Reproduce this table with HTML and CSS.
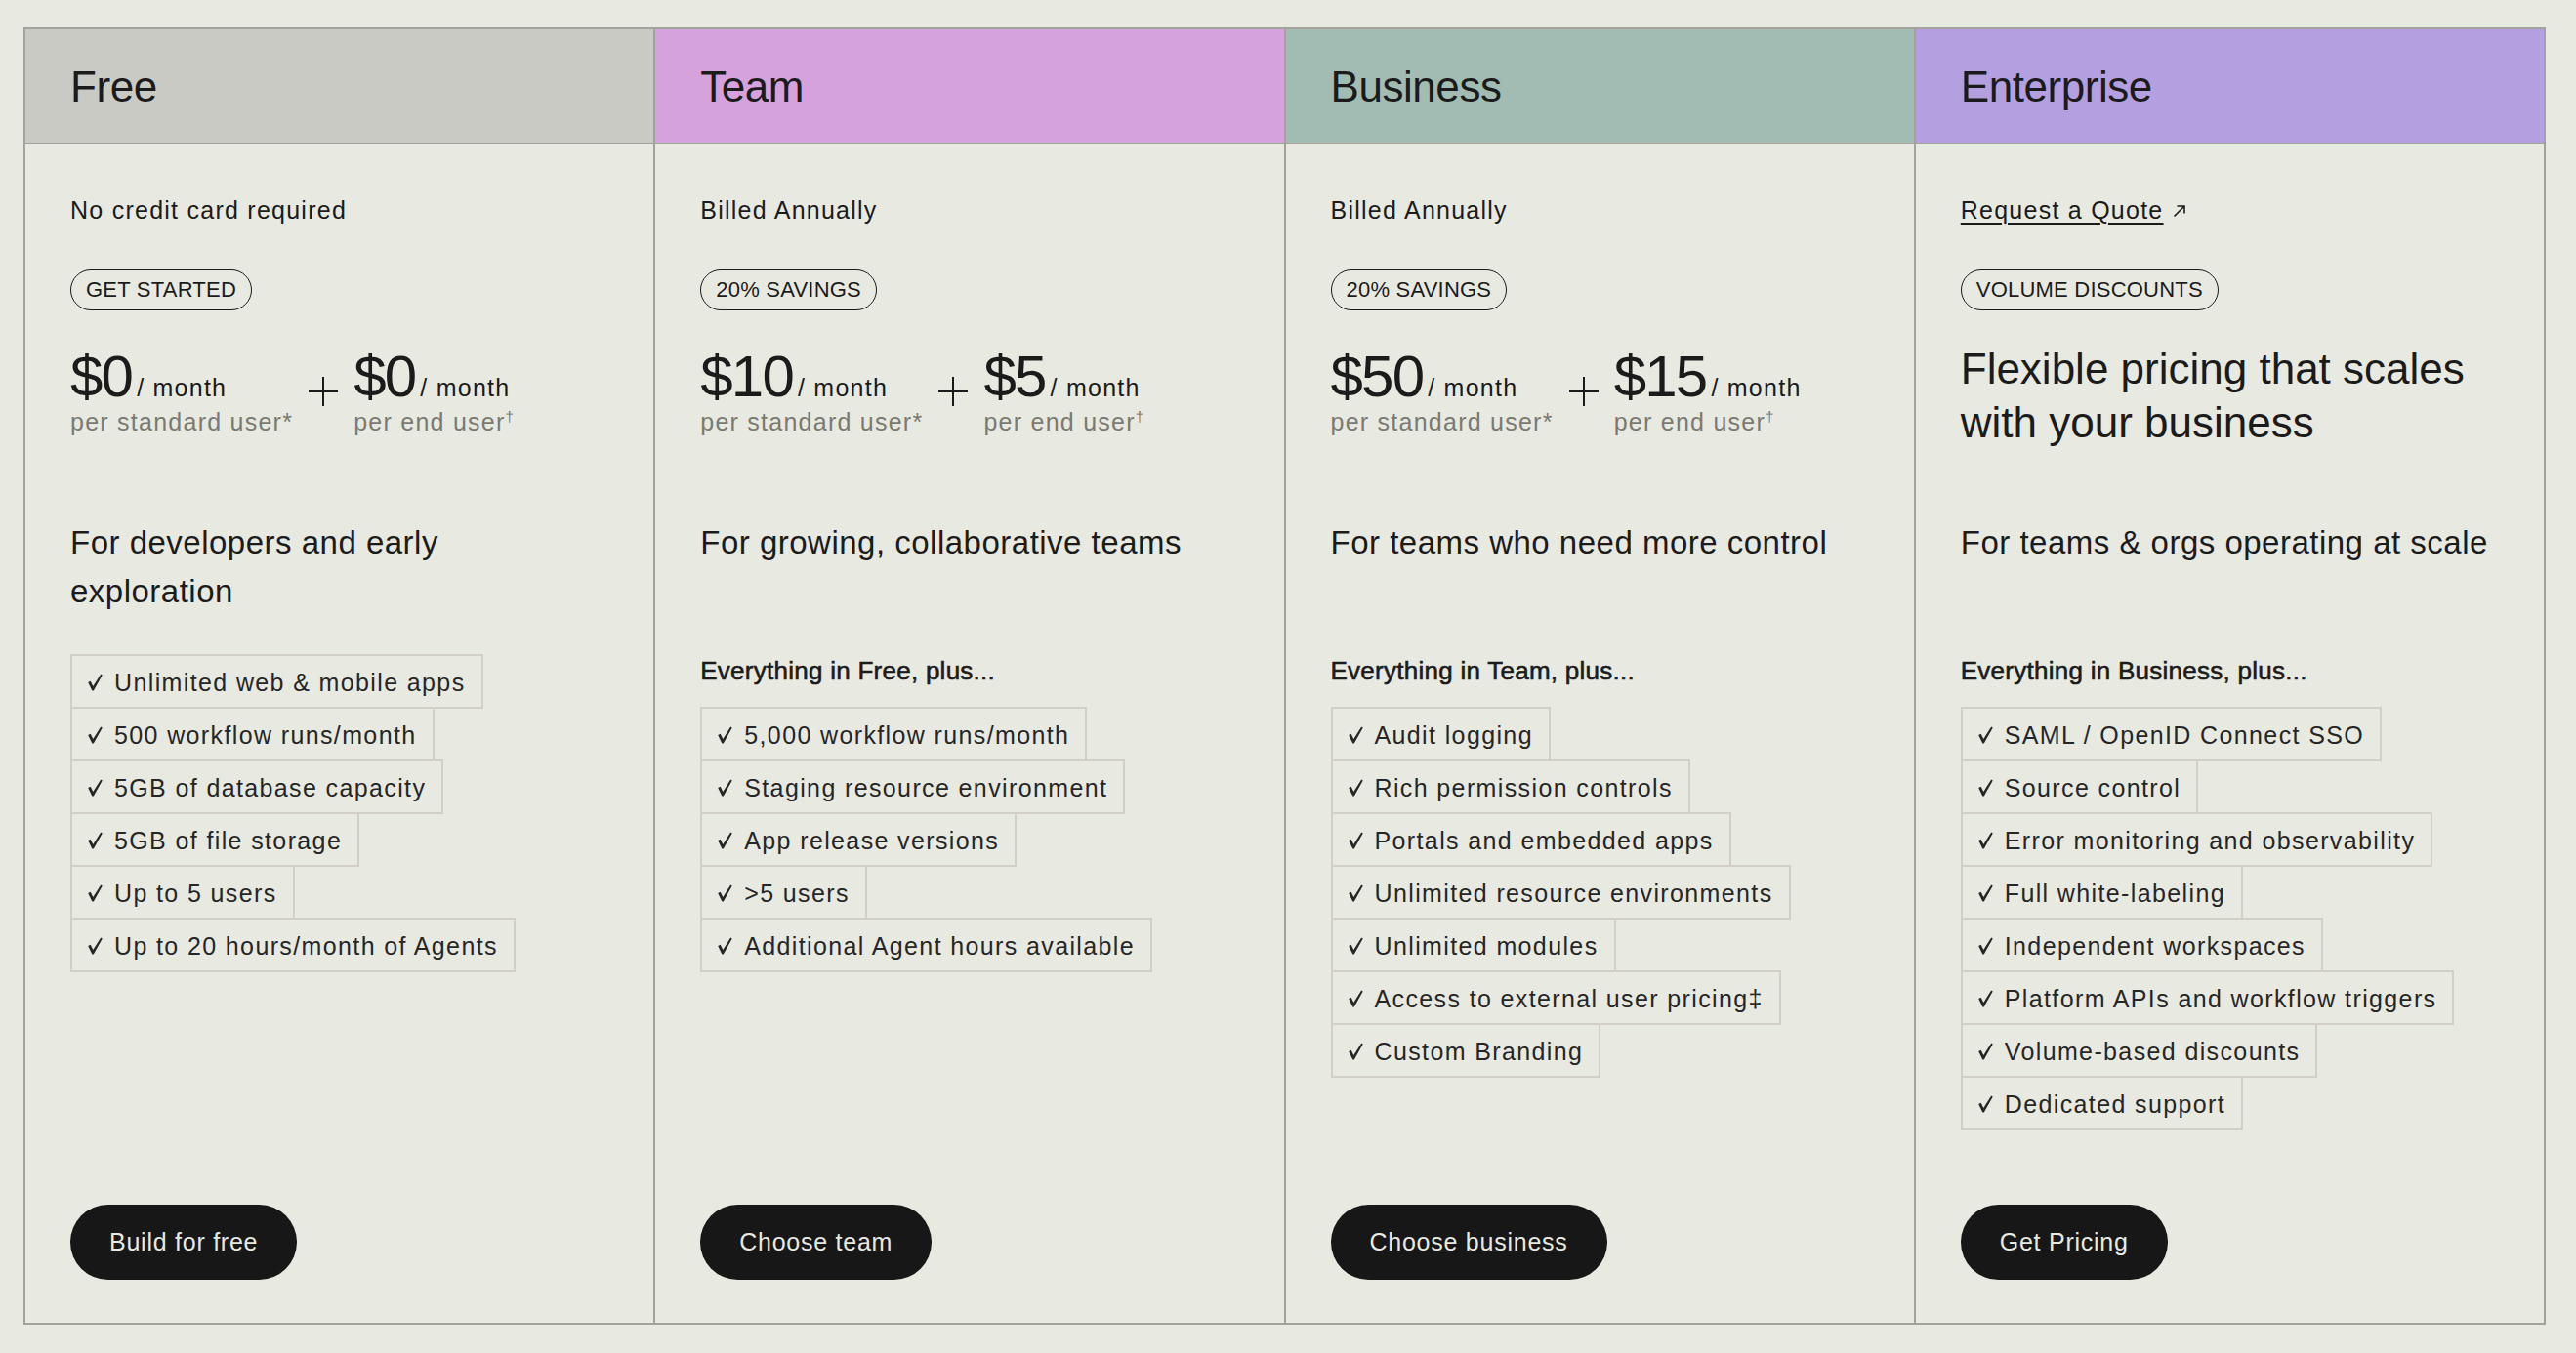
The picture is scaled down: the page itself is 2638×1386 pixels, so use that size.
FILE: index.html
```html
<!DOCTYPE html>
<html lang="en">
<head>
    <meta charset="UTF-8">
    <meta name="viewport" content="width=device-width, initial-scale=1.0">
    <title>Pricing</title>
    <link rel="stylesheet" href="styles.css">
</head>
<body>
    <div class="pricing">
        <section class="plan plan-free">
            <header class="plan-head"><h2>Free</h2></header>
            <div class="plan-body">
                <p class="note">No credit card required</p>
                <span class="tag">GET STARTED</span>
                <div class="price-area">
                    <div class="prices">
                        <div class="price">
                            <div class="amount">$0<span>/ month</span></div>
                            <div class="unit">per standard user*</div>
                        </div>
                        <svg class="plus" viewBox="0 0 30 30"><path d="M15 0v30M0 15h30"/></svg>
                        <div class="price">
                            <div class="amount">$0<span>/ month</span></div>
                            <div class="unit">per end user<sup>†</sup></div>
                        </div>
                    </div>
                </div>
                <p class="desc">For developers and early exploration</p>
                <div class="features">
                    <ul>
                        <li>Unlimited web &amp; mobile apps</li>
                        <li>500 workflow runs/month</li>
                        <li>5GB of database capacity</li>
                        <li>5GB of file storage</li>
                        <li>Up to 5 users</li>
                        <li>Up to 20 hours/month of Agents</li>
                    </ul>
                </div>
                <a class="cta" href="#">Build for free</a>
            </div>
        </section>

        <section class="plan plan-team">
            <header class="plan-head"><h2>Team</h2></header>
            <div class="plan-body">
                <p class="note">Billed Annually</p>
                <span class="tag">20% SAVINGS</span>
                <div class="price-area">
                    <div class="prices">
                        <div class="price">
                            <div class="amount">$10<span>/ month</span></div>
                            <div class="unit">per standard user*</div>
                        </div>
                        <svg class="plus" viewBox="0 0 30 30"><path d="M15 0v30M0 15h30"/></svg>
                        <div class="price">
                            <div class="amount">$5<span>/ month</span></div>
                            <div class="unit">per end user<sup>†</sup></div>
                        </div>
                    </div>
                </div>
                <p class="desc">For growing, collaborative teams</p>
                <div class="features">
                    <h3>Everything in Free, plus...</h3>
                    <ul>
                        <li>5,000 workflow runs/month</li>
                        <li>Staging resource environment</li>
                        <li>App release versions</li>
                        <li>&gt;5 users</li>
                        <li>Additional Agent hours available</li>
                    </ul>
                </div>
                <a class="cta" href="#">Choose team</a>
            </div>
        </section>

        <section class="plan plan-business">
            <header class="plan-head"><h2>Business</h2></header>
            <div class="plan-body">
                <p class="note">Billed Annually</p>
                <span class="tag">20% SAVINGS</span>
                <div class="price-area">
                    <div class="prices">
                        <div class="price">
                            <div class="amount">$50<span>/ month</span></div>
                            <div class="unit">per standard user*</div>
                        </div>
                        <svg class="plus" viewBox="0 0 30 30"><path d="M15 0v30M0 15h30"/></svg>
                        <div class="price">
                            <div class="amount">$15<span>/ month</span></div>
                            <div class="unit">per end user<sup>†</sup></div>
                        </div>
                    </div>
                </div>
                <p class="desc">For teams who need more control</p>
                <div class="features">
                    <h3>Everything in Team, plus...</h3>
                    <ul>
                        <li>Audit logging</li>
                        <li>Rich permission controls</li>
                        <li>Portals and embedded apps</li>
                        <li>Unlimited resource environments</li>
                        <li>Unlimited modules</li>
                        <li>Access to external user pricing‡</li>
                        <li>Custom Branding</li>
                    </ul>
                </div>
                <a class="cta" href="#">Choose business</a>
            </div>
        </section>

        <section class="plan plan-enterprise">
            <header class="plan-head"><h2>Enterprise</h2></header>
            <div class="plan-body">
                <p class="note">
                    <a class="quote" href="#">Request a Quote</a>
                    <svg class="arrow" viewBox="0 0 14 14"><path d="M1.5 12.5 12 2M4.5 2H12V9.5"/></svg>
                </p>
                <span class="tag">VOLUME DISCOUNTS</span>
                <div class="price-area">
                    <p class="lead">Flexible pricing that scales with your business</p>
                </div>
                <p class="desc">For teams &amp; orgs operating at scale</p>
                <div class="features">
                    <h3>Everything in Business, plus...</h3>
                    <ul>
                        <li>SAML / OpenID Connect SSO</li>
                        <li>Source control</li>
                        <li>Error monitoring and observability</li>
                        <li>Full white-labeling</li>
                        <li>Independent workspaces</li>
                        <li>Platform APIs and workflow triggers</li>
                        <li>Volume-based discounts</li>
                        <li>Dedicated support</li>
                    </ul>
                </div>
                <a class="cta" href="#">Get Pricing</a>
            </div>
        </section>
    </div>
</body>
</html>
```

FILE: styles.css
```css
* {
    box-sizing: border-box;
}
body {
    margin: 0;
    background-color: #e8e9e1;
    font-family: "Liberation Sans", Arial, sans-serif;
    color: #1b1b1b;
}
.pricing {
    display: flex;
    width: 2583px;
    height: 1329px;
    margin: 28px 0 0 24px;
    border: 2px solid #a3a39b;
}
.plan {
    flex: 1;
    min-width: 0;
    display: flex;
    flex-direction: column;
}
.plan + .plan {
    border-left: 2px solid #a3a39b;
}
.plan-head {
    height: 118px;
    padding: 2px 46px 0;
    display: flex;
    align-items: center;
    border-bottom: 2px solid #a3a39b;
}
.plan-head h2 {
    margin: 0;
    font-size: 44px;
    line-height: 44px;
    font-weight: 400;
    letter-spacing: -0.01em;
}
.plan-free .plan-head { background-color: #c9cac3; }
.plan-team .plan-head { background-color: #d6a2dd; }
.plan-business .plan-head { background-color: #a2bcb4; }
.plan-enterprise .plan-head { background-color: #b4a0e0; }

.plan-body {
    flex: 1;
    display: flex;
    flex-direction: column;
    align-items: flex-start;
    padding: 50px 46px 44px;
}
.note {
    margin: 0;
    display: flex;
    align-items: center;
    gap: 9px;
    font-size: 25px;
    line-height: 35px;
    letter-spacing: 0.05em;
}
.quote {
    color: #1b1b1b;
    text-decoration: underline;
    text-decoration-thickness: 1.5px;
    text-underline-offset: 4px;
}
.arrow {
    width: 14px;
    height: 14px;
    fill: none;
    stroke: #1b1b1b;
    stroke-width: 1.6;
}
.tag {
    margin-top: 43px;
    padding: 0 15px;
    border: 1.5px solid #1b1b1b;
    border-radius: 22px;
    font-size: 22px;
    line-height: 40px;
    letter-spacing: 0.01em;
}
.price-area {
    align-self: stretch;
    height: 112px;
    margin-top: 32px;
}
.prices {
    display: flex;
    align-items: center;
    gap: 16px;
    padding-top: 5px;
}
.amount {
    font-size: 60px;
    line-height: 62px;
    letter-spacing: -0.03em;
    white-space: nowrap;
}
.amount span {
    margin-left: 5px;
    font-size: 25px;
    line-height: 1;
    letter-spacing: 0.05em;
}
.unit {
    font-size: 25px;
    line-height: 30px;
    letter-spacing: 0.05em;
    color: #7a7a72;
    white-space: nowrap;
}
.unit sup {
    font-size: 15px;
    line-height: 0;
}
.plus {
    width: 30px;
    height: 30px;
    flex: none;
    stroke: #1b1b1b;
    stroke-width: 2;
}
.lead {
    margin: 0;
    font-size: 44px;
    line-height: 55px;
}
.desc {
    max-width: 548px;
    min-height: 100px;
    margin: 69px 0 0;
    font-size: 33px;
    line-height: 50px;
    letter-spacing: 0.015em;
}
.features {
    margin-top: 39px;
}
.features h3 {
    margin: 0 0 20px;
    font-size: 26px;
    line-height: 34px;
    font-weight: 400;
    letter-spacing: 0.01em;
    -webkit-text-stroke: 0.6px #1b1b1b;
}
.features ul {
    list-style: none;
    margin: 0;
    padding: 0;
    display: flex;
    flex-direction: column;
    align-items: flex-start;
}
.features li {
    display: flex;
    align-items: center;
    gap: 12px;
    padding: 12px 16px 10px;
    border: 2px solid #d2cfc6;
    font-size: 25px;
    line-height: 30px;
    letter-spacing: 0.055em;
    color: #262626;
    white-space: nowrap;
}
.features li + li {
    margin-top: -2px;
}
.features li::before {
    content: "";
    flex: none;
    width: 15px;
    height: 18px;
    background: url("data:image/svg+xml,%3Csvg xmlns='http://www.w3.org/2000/svg' viewBox='0 0 15 18'%3E%3Cpath d='M0.2 8.9 2.7 7.8 5.3 12.9 13.2 0.4 14.8 1.4 5.8 17.4 4.3 17.4Z' fill='%23262626'/%3E%3C/svg%3E") no-repeat;
}
.cta {
    margin-top: auto;
    height: 77px;
    padding: 0 40px;
    border-radius: 39px;
    background-color: #171717;
    color: #e8e9e1;
    font-size: 25px;
    line-height: 77px;
    letter-spacing: 0.03em;
    text-decoration: none;
}
```
